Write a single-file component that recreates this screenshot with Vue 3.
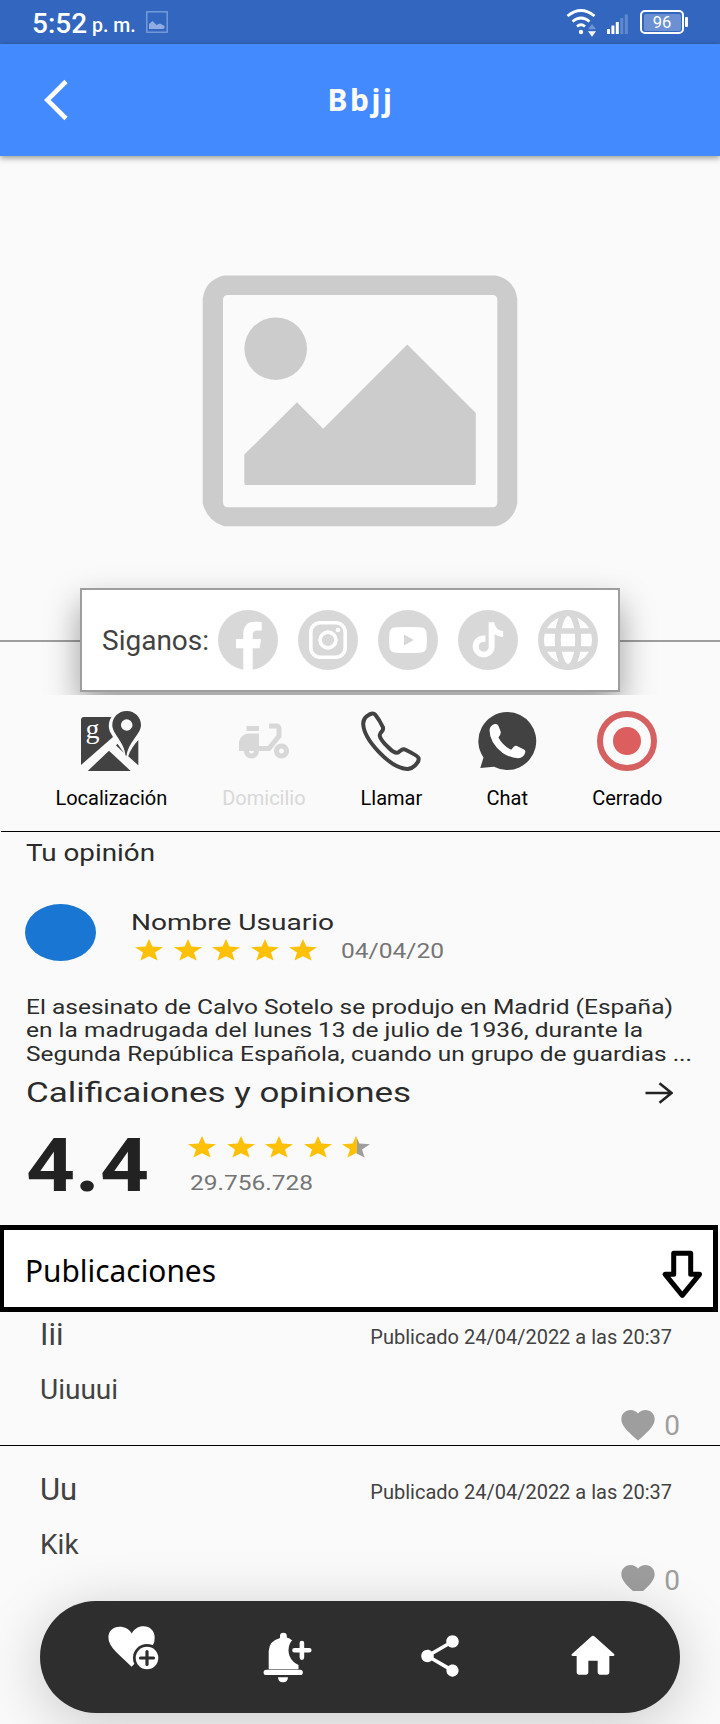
<script setup>
// Scales a line of text horizontally so that it fills the given width.
const vFit = {
  mounted(el, { value }) {
    const natural = el.getBoundingClientRect().width
    el.style.transform = `scaleX(${value / natural})`
  },
}

const reviewLines = [
  { text: 'El asesinato de Calvo Sotelo se produjo en Madrid (España)', width: 647 },
  { text: 'en la madrugada del lunes 13 de julio de 1936, durante la', width: 617 },
  { text: 'Segunda República Española, cuando un grupo de guardias ...', width: 666 },
]

const posts = [
  { title: 'Iii', body: 'Uiuuui', date: 'Publicado 24/04/2022 a las 20:37', likes: 0 },
  { title: 'Uu', body: 'Kik', date: 'Publicado 24/04/2022 a las 20:37', likes: 0 },
]

const starPath = 'M14 0L17.4 7.6L28 8.3L20 13.4L22.6 21.6L14 17.2L5.4 21.6L8 13.4L0 8.3L10.6 7.6Z'
</script>

<template>
  <div class="screen">
    <header class="status">
      <span class="clock">5:52</span>
      <span class="ampm">p. m.</span>
      <svg class="shot" width="22" height="22" viewBox="0 0 22 22">
        <rect x="0.8" y="0.8" width="20.4" height="20.4" fill="none" stroke="#7fa2dc" stroke-width="1.3" />
        <path d="M3 18V13L6.5 10L10.500 14L14 12.500L18.500 15V17L17 18Z" fill="#8fade0" />
      </svg>
      <div class="tray">
        <svg width="64" height="44" viewBox="566 0 64 44">
          <g fill="none" stroke="#fff" stroke-width="2.7">
            <path d="M567.500 16Q581 5 594.500 16" />
            <path d="M572.500 21.500Q581 14.500 589.500 21.500" />
            <path d="M577 26.500Q581 23 585 26.500" />
          </g>
          <circle cx="581" cy="32" r="2.2" fill="#fff" />
          <path d="M588 29.200L592 24L596 29.200Z" fill="#7095d4" />
          <path d="M588 31.200L592 36.700L596 31.200Z" fill="#fff" />
          <g fill="#fff">
            <rect x="607" y="29" width="3" height="5" />
            <rect x="611.4" y="25.500" width="3" height="8.500" />
            <rect x="615.8" y="22" width="3" height="12" />
          </g>
          <g fill="#6189cf">
            <rect x="620.3" y="18" width="3" height="16" />
            <rect x="624.8" y="14.500" width="3" height="19.500" />
          </g>
        </svg>
        <div class="battery"><span>96</span></div>
      </div>
    </header>

    <nav class="appbar">
      <svg class="back" width="26" height="42" viewBox="43 79 26 42">
        <path d="M66 81.500L47.300 100L66 118.500" fill="none" stroke="#fff" stroke-width="4.6" />
      </svg>
      <h1>Bbjj</h1>
    </nav>

    <section class="hero">
      <svg class="placeholder" width="720" height="484" viewBox="0 156 720 484">
        <g fill="#ccc">
          <path fill-rule="evenodd" d="M224 275.500H496Q515 280 517.300 299V503Q514 521 496 526.300H224Q207 521 202.700 503V299Q205 280 224 275.500ZM228 295Q223 295 223 300V502.300Q223 507.300 228 507.300H492.300Q497.300 507.300 497.300 502.300V300Q497.300 295 492.300 295Z" />
          <circle cx="275.700" cy="348.700" r="31.3" />
          <path d="M244.300 454.500L297 402.300L323.200 428.700L407.300 344.500L475.800 413V483.500Q475.800 485 474 485H246Q244.300 485 244.300 483Z" />
        </g>
      </svg>
      <div class="follow">
        <span class="follow-label">Siganos:</span>
        <svg width="60" height="60" viewBox="0 0 60 60">
          <circle cx="30" cy="30" r="30" fill="#d8d8d8" />
          <path fill="#fff" d="M25.300 60V38.300H18V29h7.300v-5c0-8 4-12.300 11.500-12.300 3 0 6.900.3 6.900.3v8.600h-4c-3.800 0-5 1.800-5 4.600V29h8.300l-1.300 9.300h-7V60z" />
        </svg>
        <svg width="60" height="60" viewBox="0 0 60 60">
          <circle cx="30" cy="30" r="30" fill="#d8d8d8" />
          <g fill="none" stroke="#fff" stroke-width="3.6">
            <rect x="12.800" y="12.800" width="34.4" height="34.4" rx="9.500" />
            <circle cx="30" cy="30" r="7.900" />
          </g>
          <circle cx="40" cy="20" r="2.300" fill="#fff" />
        </svg>
        <svg width="60" height="60" viewBox="0 0 60 60">
          <circle cx="30" cy="30" r="30" fill="#d8d8d8" />
          <path d="M18 17.300Q30 16.500 42 17.300Q47.500 17.500 48.400 22Q49.500 30 48.400 38Q47.500 42.500 42 42.700Q30 43.500 18 42.700Q12.500 42.500 11.600 38Q10.500 30 11.600 22Q12.500 17.500 18 17.300Z" fill="#fff" />
          <path d="M26 24.500L35.800 30L26 35.500Z" fill="#d8d8d8" />
        </svg>
        <svg width="60" height="60" viewBox="0 0 60 60">
          <circle cx="30" cy="30" r="30" fill="#d8d8d8" />
          <path transform="translate(12.400 12.300) scale(1.460)" fill="#fff" d="M12.525.02c1.310-.02 2.610-.01 3.910-.02.08 1.530.63 3.090 1.750 4.170 1.120 1.110 2.700 1.620 4.240 1.790v4.030c-1.440-.05-2.890-.35-4.200-.97-.57-.26-1.100-.59-1.620-.93-.01 2.920.01 5.840-.02 8.750-.08 1.400-.54 2.790-1.350 3.940-1.310 1.920-3.580 3.170-5.910 3.210-1.430.08-2.860-.31-4.080-1.030-2.020-1.190-3.440-3.370-3.650-5.710-.02-.5-.03-1-.01-1.490.18-1.900 1.120-3.720 2.580-4.960 1.660-1.440 3.980-2.130 6.150-1.720.02 1.480-.04 2.960-.04 4.440-.99-.32-2.150-.23-3.020.37-.63.41-1.110 1.040-1.360 1.750-.21.51-.15 1.070-.14 1.610.24 1.640 1.820 3.020 3.500 2.870 1.120-.01 2.190-.66 2.770-1.610.19-.33.4-.67.41-1.060.1-1.790.06-3.570.07-5.360.01-4.030-.01-8.050.02-12.070z" />
        </svg>
        <svg width="60" height="60" viewBox="0 0 60 60">
          <g fill="none" stroke="#d8d8d8" stroke-width="6">
            <circle cx="30" cy="30" r="27" />
            <ellipse cx="30" cy="30" rx="10.200" ry="27" />
            <path d="M4 21H56M4 39H56" stroke-width="5.600" />
          </g>
        </svg>
      </div>
    </section>

    <section class="actions">
      <div class="action">
        <svg width="60" height="60" viewBox="0 0 60 60">
          <g fill="#424242">
            <path d="M3 6H30.500C27 11 27 18 30 22.500L32 26L0 54V9Q0 6 3 6Z" />
            <path d="M28 39.700L6.700 60H49.700Z" />
            <path d="M57.300 29V54.300L47.200 45.200Q50 37 57.300 29Z" />
            <path d="M35 34.500L36.500 32.700L43 42Z" />
            <path fill-rule="evenodd" d="M45.700 0C53.800 0 60 6.300 60 14C60 23 47.500 31 45.600 44.500H44.500C43.500 31 31.300 23 31.300 14C31.300 6.300 37.500 0 45.700 0ZM45.700 8.200A5.800 5.800 0 1 0 45.700 19.800A5.800 5.800 0 1 0 45.700 8.200Z" />
          </g>
          <text x="4.500" y="26.500" class="g-mark">g</text>
        </svg>
        <span>Localización</span>
      </div>
      <div class="action off">
        <svg width="60" height="60" viewBox="0 0 24 24" fill="#d8d8d8">
          <path fill-rule="evenodd" d="M19 7c0-1.100-.9-2-2-2h-3v2h3v2.650L13.520 14H10V9H6c-2.210 0-4 1.790-4 4v3h2c0 1.660 1.340 3 3 3s3-1.340 3-3h4.480L19 10.350V7zM7 17c-.55 0-1-.45-1-1h2c0 .55-.45 1-1 1z" />
          <path d="M5 6h5v2H5z" />
          <path fill-rule="evenodd" d="M19 13c-1.660 0-3 1.340-3 3s1.340 3 3 3 3-1.340 3-3-1.340-3-3-3zm0 4c-.55 0-1-.45-1-1s.45-1 1-1 1 .45 1 1-.45 1-1 1z" />
        </svg>
        <span>Domicilio</span>
      </div>
      <div class="action">
        <svg width="60" height="60" viewBox="0 0 60 60">
          <path fill="none" stroke="#424242" stroke-width="4" stroke-linejoin="round" d="M12 2.500Q9.500 2.200 5.500 5.500Q2 8.500 2.200 13C3 29 29 57 46 58Q50 58.300 54 54.500Q58.500 50 57.500 47Q57 45 44.500 38.800Q42.500 37.800 40.500 39L37.500 41.200Q34 43.300 27.500 36.500Q18.500 28 18.700 24Q18.800 22.500 20.800 20.500Q22.800 18 21.800 16Q18.500 9 14.500 4Q13.500 2.600 12 2.500Z" />
        </svg>
        <span>Llamar</span>
      </div>
      <div class="action">
        <svg width="60" height="60" viewBox="0 0 60 60">
          <path fill="#424242" d="M30.500 1A29 29 0 1 1 17 55.800L3.300 57L6.500 46.500A29 29 0 0 1 30.500 1Z" />
          <path fill="#fff" d="M12.500 19Q13 14.500 17.500 13Q21 12.500 21.500 15L23.800 21Q24 23.500 21.400 26.500Q26 35 34.200 38.800L37 35.500Q38.500 34.200 40 35L47 38.500Q48.800 39.500 48.200 41.500Q47 46.500 41 47.300Q34 47 26 42.300Q12.500 32 12.500 19Z" />
        </svg>
        <span>Chat</span>
      </div>
      <div class="action">
        <svg width="60" height="60" viewBox="0 0 60 60">
          <circle cx="30" cy="30" r="27" fill="none" stroke="#d66060" stroke-width="6" />
          <circle cx="30" cy="30" r="14" fill="#dc5e5e" />
        </svg>
        <span>Cerrado</span>
      </div>
    </section>

    <section class="reviews">
      <p v-fit="129" class="own">Tu opinión</p>
      <div class="user">
        <div class="avatar"></div>
        <div class="user-info">
          <p v-fit="203" class="name">Nombre Usuario</p>
          <div class="stars-row">
            <svg v-for="n in 5" :key="n" width="28" height="22" viewBox="0 0 28 22">
              <path :d="starPath" fill="#ffc107" />
            </svg>
            <span v-fit="103" class="date">04/04/20</span>
          </div>
        </div>
      </div>
      <div class="quote">
        <p v-for="line in reviewLines" :key="line.text" v-fit="line.width">{{ line.text }}</p>
      </div>
      <div class="summary-head">
        <h2 v-fit="385">Calificaiones y opiniones</h2>
        <svg width="28" height="22" viewBox="0 0 28 22">
          <path d="M0.500 11H26M14.500 1.200L26.500 11L14.500 20.800" fill="none" stroke="#222" stroke-width="2.500" />
        </svg>
      </div>
      <div class="summary">
        <div class="score-cell"><span v-fit="123" class="score">4.4</span></div>
        <div class="summary-info">
          <div class="stars-row">
            <svg v-for="n in 4" :key="n" width="28" height="22" viewBox="0 0 28 22">
              <path :d="starPath" fill="#ffc107" />
            </svg>
            <svg width="28" height="22" viewBox="0 0 28 22">
              <defs>
                <linearGradient id="half-star">
                  <stop offset="0.54" stop-color="#ffc107" />
                  <stop offset="0.54" stop-color="#9e9e9e" />
                </linearGradient>
              </defs>
              <path :d="starPath" fill="url(#half-star)" />
            </svg>
          </div>
          <span v-fit="123" class="count">29.756.728</span>
        </div>
      </div>
    </section>

    <section class="publications">
      <h2 v-fit="191">Publicaciones</h2>
      <svg width="45" height="52" viewBox="0 0 45 52">
        <path d="M13.700 5.300H30.700V26.300H39.500L22.300 47.300L5.200 26.300H13.700Z" fill="#fff" stroke="#000" stroke-width="5" stroke-linejoin="round" />
      </svg>
    </section>

    <section class="posts">
      <article v-for="(post, i) in posts" :key="i" class="post">
        <div class="post-head">
          <h3>{{ post.title }}</h3>
          <time>{{ post.date }}</time>
        </div>
        <p class="post-body">{{ post.body }}</p>
        <div class="likes">
          <svg width="40" height="40" viewBox="0 0 24 24">
            <path fill="#9e9e9e" d="M12 21.350l-1.450-1.320C5.400 15.360 2 12.280 2 8.500 2 5.420 4.420 3 7.500 3c1.740 0 3.410.81 4.500 2.090C13.090 3.810 14.760 3 16.500 3 19.580 3 22 5.420 22 8.500c0 3.780-3.400 6.860-8.550 11.540L12 21.350z" />
          </svg>
          <span>{{ post.likes }}</span>
        </div>
      </article>
    </section>

    <footer class="dock-area">
      <div class="dock">
        <div class="dock-item raised">
          <svg width="52" height="46" viewBox="0 0 52 46">
            <path fill="#fff" d="M23.500 40.700L22 39.200C12 29 0.400 21.500 0.400 11.500C0.400 5 5 0.800 11.500 0.800C17 0.800 21.500 3.500 23.800 7.500C26 3 30.500 0.300 35.500 0.300C42 0.300 46.700 5 46.700 11.500Q47 16 44.500 20Z" />
            <circle cx="39" cy="32" r="14" fill="#2e2e2e" />
            <circle cx="39" cy="32" r="11.300" fill="#fff" />
            <path d="M32.500 32H45.500M39 25.500V38.500" stroke="#2e2e2e" stroke-width="3.200" stroke-linecap="round" />
          </svg>
        </div>
        <div class="dock-item">
          <svg width="50" height="51" viewBox="0 0 50 51">
            <path fill="#fff" d="M17 6V4Q17 .7 20.400 .7Q23.800 .7 23.800 4V5.500Q29 7 35.500 14V37.300H5.700V19Q6 9 17 6Z" />
            <circle cx="41" cy="18.300" r="15.500" fill="#2e2e2e" />
            <rect x="0.600" y="37.800" width="39.200" height="5.200" rx="2.600" fill="#fff" />
            <path d="M15 45.300H25Q25 50.300 20 50.300Q15 50.300 15 45.300Z" fill="#fff" />
            <path d="M31.500 18.300H46.300M38.900 11V25.600" stroke="#fff" stroke-width="4.600" stroke-linecap="round" />
          </svg>
        </div>
        <div class="dock-item">
          <svg width="50" height="50" viewBox="0 0 24 24">
            <path fill="#fff" d="M18 16.080c-.76 0-1.440.3-1.960.77L8.910 12.700c.05-.23.09-.46.09-.7s-.04-.47-.09-.7l7.050-4.110c.54.5 1.250.81 2.040.81 1.660 0 3-1.340 3-3s-1.340-3-3-3-3 1.340-3 3c0 .24.04.47.09.7L8.040 9.810C7.500 9.310 6.790 9 6 9c-1.660 0-3 1.340-3 3s1.340 3 3 3c.79 0 1.500-.31 2.040-.81l7.120 4.160c-.05.21-.08.43-.08.65 0 1.610 1.310 2.920 2.920 2.920 1.610 0 2.920-1.310 2.920-2.920s-1.310-2.920-2.920-2.920z" />
          </svg>
        </div>
        <div class="dock-item">
          <svg width="56" height="56" viewBox="0 0 24 24">
            <path fill="#fff" d="M10 19v-5h4v5c0 .55.45 1 1 1h3c.55 0 1-.45 1-1v-7h1.700c.46 0 .68-.57.33-.87L12.670 3.600c-.38-.34-.96-.34-1.340 0l-8.360 7.530c-.34.3-.13.87.33.87H5v7c0 .55.45 1 1 1h3c.55 0 1-.45 1-1z" />
          </svg>
        </div>
      </div>
    </footer>
  </div>
</template>

<style>
html,
body {
  margin: 0;
  background: #fafafa;
}
</style>

<style scoped>
.screen {
  width: 720px;
  height: 1724px;
  overflow: hidden;
  display: flex;
  flex-direction: column;
  background: #fafafa;
  font-family: Roboto, "Liberation Sans", sans-serif;
  color: #424242;
}
h1, h2, h3, p { margin: 0; font-weight: 400; }
svg { display: block; flex: none; }

.status {
  flex: none;
  height: 44px;
  display: flex;
  background: #3266bf;
  color: #fff;
  font-weight: 500;
  white-space: nowrap;
}
.clock { margin-left: 32px; width: 60px; font-size: 28px; line-height: 47px; }
.ampm { width: 53px; font-size: 19.5px; line-height: 52px; }
.shot { margin: 11px 0 0 1px; }
.tray { margin-left: auto; display: flex; padding-right: 36px; }
.battery {
  position: relative;
  box-sizing: border-box;
  width: 44px;
  height: 24px;
  margin: 10px 0 0 10px;
  padding: 1.5px;
  border: 2.300px solid #fff;
  border-radius: 5px;
}
.battery span {
  display: block;
  height: 17px;
  border-radius: 2px;
  background: #6b91d3;
  font-size: 16.5px;
  font-weight: 400;
  line-height: 18px;
  text-align: center;
}
.battery::after {
  content: "";
  position: absolute;
  right: -6px;
  top: 5px;
  width: 3.500px;
  height: 10px;
  border-radius: 1px;
  background: #fff;
}

.appbar {
  flex: none;
  position: relative;
  z-index: 1;
  height: 112px;
  display: flex;
  align-items: center;
  background: #448aff;
  box-shadow: 0 2px 6px rgba(0, 0, 0, 0.4);
  color: #fff;
}
.back { margin-left: 43px; }
.appbar h1 {
  flex: 1;
  margin-right: 69px;
  padding-left: 2px;
  text-align: center;
  font: 700 30px/42px "Noto Sans", "Open Sans", sans-serif;
  letter-spacing: 2.5px;
}

.hero { flex: none; height: 539px; overflow: hidden; }
.placeholder { border-bottom: 2px solid #9e9e9e; }
.follow {
  position: relative;
  box-sizing: border-box;
  width: 540px;
  height: 104px;
  margin: -54px 0 0 80px;
  padding: 0 20px;
  display: flex;
  align-items: center;
  gap: 20px;
  background: #fff;
  border: 2px solid #9e9e9e;
  box-shadow: 0 16px 34px rgba(0, 0, 0, 0.38);
}
.follow-label { width: 96px; white-space: nowrap; font-size: 28px; line-height: 34px; padding-top: 1px; }

.actions {
  flex: none;
  box-sizing: border-box;
  height: 137px;
  margin-left: 1px;
  padding: 16px 2px 0 0;
  display: flex;
  justify-content: space-evenly;
  border-bottom: 1px solid #000;
  color: #000;
}
.action { position: relative; left: -0.500px; display: flex; flex-direction: column; align-items: center; }
.action span { margin-top: 15px; font-size: 20px; line-height: 24px; }
.off { color: #d8d8d8; }
.g-mark { font: 28px "Liberation Serif", serif; fill: #fff; }

.reviews {
  flex: none;
  box-sizing: border-box;
  height: 393px;
  padding: 5.700px 0 0 25px;
  color: #2b2b2b;
  white-space: nowrap;
}
.reviews p, .reviews h2, .reviews span { width: max-content; transform-origin: left; }
.own { margin-left: 1px; font-size: 23.5px; line-height: 30px; }
.user { height: 57px; margin-top: 36.300px; display: flex; }
.avatar { width: 71px; height: 57px; border-radius: 50%; background: #1976d2; }
.user-info { margin: 4.600px 0 0 33px; }
.name { margin-left: 2px; font-size: 22.500px; line-height: 26px; }
.stars-row { display: flex; gap: 10.500px; }
.user-info .stars-row { margin: 4px 0 0 6px; }
.date { margin: 1px 0 0 13px; font-size: 20px; line-height: 22px; color: #757575; }
.quote { margin: 34.600px 0 0 1px; font-size: 19.500px; line-height: 23.500px; }
.summary-head { margin-top: 10px; display: flex; justify-content: space-between; align-items: center; padding-right: 47px; }
.summary-head h2 { margin-left: 1px; font-size: 28px; line-height: 34px; }
.summary { margin-top: 17.800px; display: flex; }
.score-cell { width: 163px; }
.score { display: block; margin-left: 1px; font-size: 75px; line-height: 75px; font-weight: 700; color: #222; }
.summary-info { margin-top: 8.200px; }
.count { display: block; margin: 13px 0 0 2px; font-size: 20.500px; line-height: 24px; color: #757575; }

.publications {
  flex: none;
  box-sizing: border-box;
  width: 718px;
  height: 87px;
  padding: 0 8px 0 21px;
  display: flex;
  align-items: center;
  justify-content: space-between;
  background: #fff;
  border: solid #000;
  border-width: 5px 5px 5px 4px;
  color: #000;
}
.publications h2 { margin-top: 5px; font: 400 30px/40px "Noto Sans", "Open Sans", sans-serif; transform-origin: left; }
.publications svg { margin-top: 11px; }

.posts { flex: none; height: 279px; }
.post { box-sizing: border-box; height: 155px; border-bottom: 1px solid #000; padding: 0 40px 0 40px; }
.post:first-child { margin-top: -21px; }
.post:last-child { border-bottom: none; }
.post:last-child .likes svg { clip-path: inset(0 0 9px 0); }
.post-head { height: 38px; display: flex; justify-content: space-between; padding: 24px 8px 0 0; }
.post-head h3 { font-size: 31px; line-height: 40px; }
.post-head time { font-size: 20px; line-height: 44px; }
.post-body { margin-top: 20px; font-size: 28px; line-height: 34px; }
.likes { display: flex; margin-top: -2px; justify-content: flex-end; color: #9e9e9e; }
.likes span { margin-left: 6px; font-size: 28px; line-height: 41px; }

.dock-area { position: relative; flex: none; height: 133px; }
.dock {
  box-sizing: border-box;
  width: 640px;
  height: 112px;
  margin: 10px 0 0 40px;
  padding-left: 17px;
  display: grid;
  grid-template-columns: repeat(4, 153.400px);
  align-items: center;
  border-radius: 56px;
  background: #2e2e2e;
  box-shadow: 0 10px 60px rgba(0, 0, 0, 0.2);
}
.dock-item { display: flex; justify-content: center; }
.dock-item:nth-child(-n + 2) svg { margin-left: 1.500px; }
.dock-item:nth-child(n + 3) svg { margin: 0 1.500px 1.500px 0; }
.raised { padding-bottom: 16px; }
</style>
